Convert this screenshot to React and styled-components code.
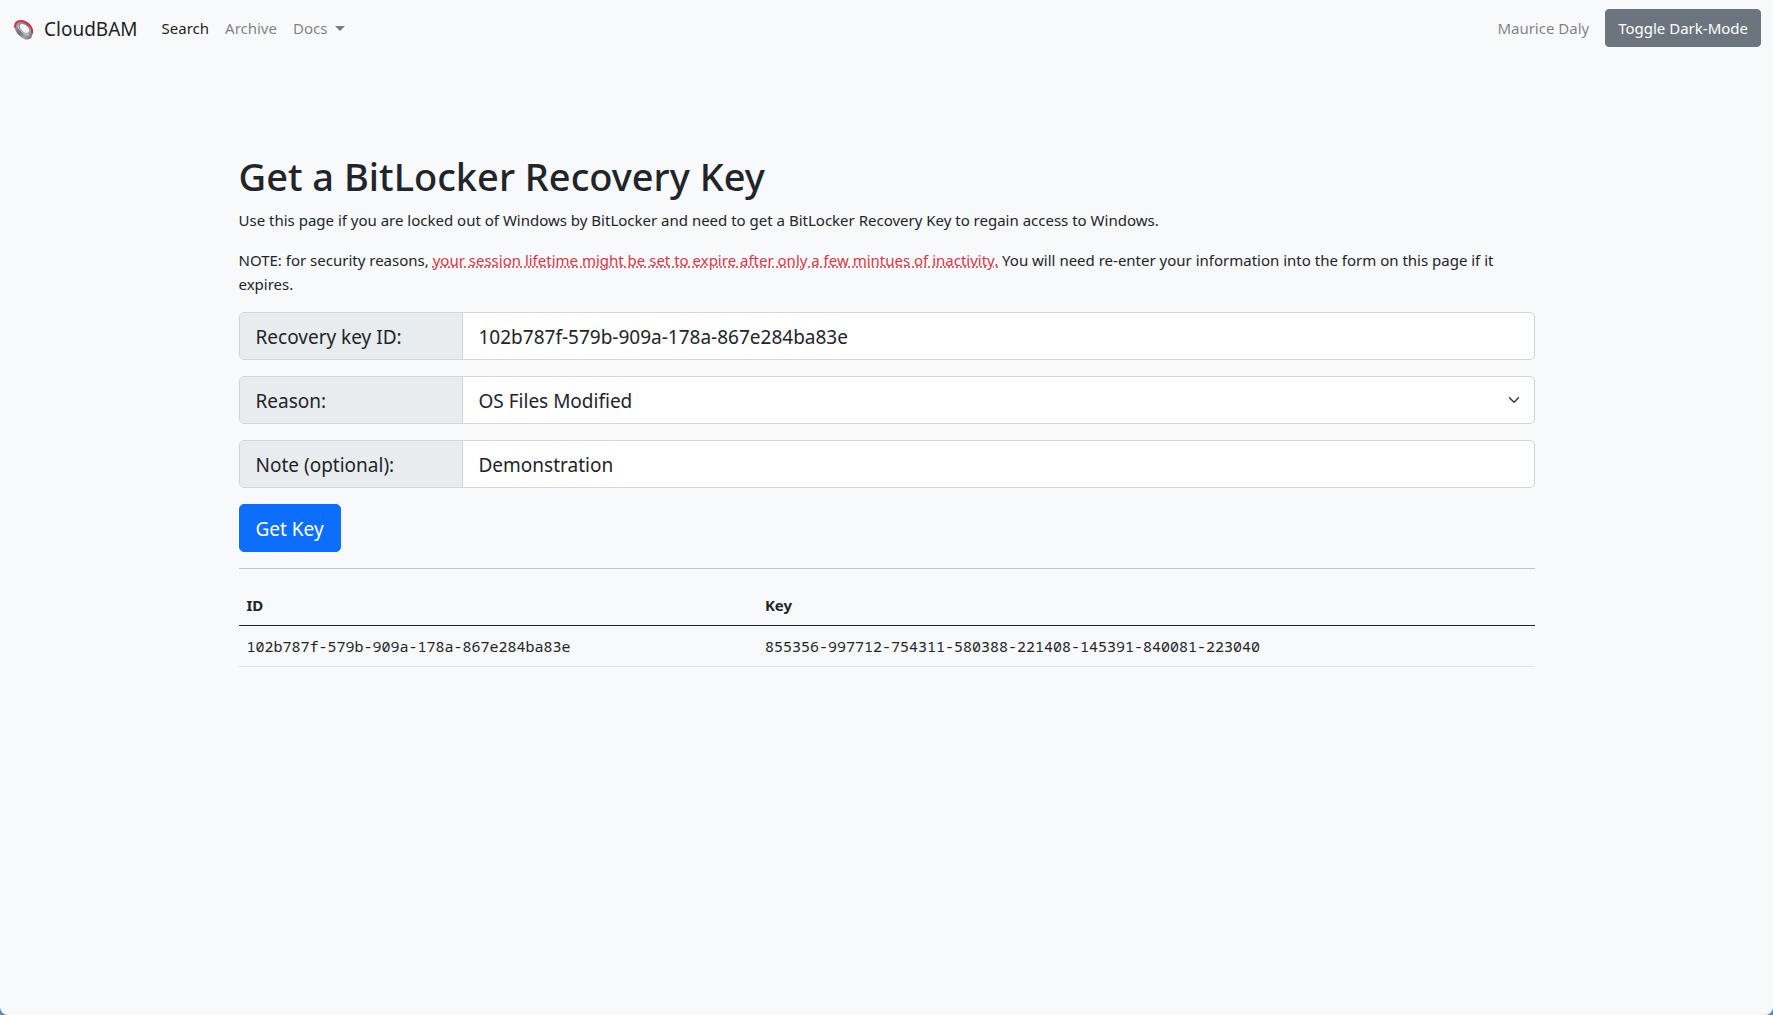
import React, { useState } from "react";
import styled, { createGlobalStyle } from "styled-components";

const GlobalStyle = createGlobalStyle`
  *, *::before, *::after { box-sizing: border-box; }
  html { background: #3f93d8; }
  body {
    margin: 0;
    color: #212529;
    font-family: "Segoe UI", "Noto Sans", "Open Sans", sans-serif;
    font-size: 15px;
    line-height: 24px;
  }
`;

const Page = styled.div`
  min-height: 100vh;
  background: #f8f9fb;
  border-radius: 0 0 8px 8px;
`;

const Navbar = styled.nav`
  display: flex;
  align-items: center;
  justify-content: space-between;
  min-height: 56px;
  padding: 8px 12px;
`;

const NavGroup = styled.div`
  display: flex;
  align-items: center;
`;

const Brand = styled.a`
  display: flex;
  align-items: center;
  gap: 8px;
  margin-right: 16px;
  padding-top: 2px;
  color: rgba(0, 0, 0, 0.9);
  font-size: 19px;
  line-height: 30px;
  text-decoration: none;
`;

const NavLink = styled.a`
  display: flex;
  align-items: center;
  padding: 8px;
  color: ${(p) => (p.$active ? "rgba(0, 0, 0, 0.9)" : "rgba(0, 0, 0, 0.5)")};
  text-decoration: none;
`;

const Caret = styled.span`
  margin-left: 8px;
  border-top: 5px solid currentColor;
  border-right: 5px solid transparent;
  border-left: 5px solid transparent;
`;

const Button = styled.button`
  padding: ${(p) => (p.$large ? "9px 16px 7px" : "6px 12px")};
  border: 1px solid ${(p) => (p.$primary ? "#0d6efd" : "#6c757d")};
  border-radius: ${(p) => (p.$large ? "5px" : "4px")};
  background: ${(p) => (p.$primary ? "#0d6efd" : "#6c757d")};
  color: #fff;
  font-family: inherit;
  font-size: ${(p) => (p.$large ? "19px" : "15px")};
  line-height: ${(p) => (p.$large ? "30px" : "24px")};
  cursor: pointer;
`;

const UserLink = styled(NavLink)`
  margin-right: 8px;
`;

const Main = styled.main`
  max-width: 1320px;
  margin: 0 auto;
  padding: 96px 12px 48px;
`;

const Title = styled.h1`
  margin: 0 0 8px;
  font-size: 38px;
  font-weight: 500;
  line-height: 48px;
`;

const Text = styled.p`
  margin: 0 0 16px;
`;

const Warning = styled.span`
  color: #dc3545;
  text-decoration: underline dotted;
`;

const Form = styled.form`
  display: flex;
  flex-direction: column;
  align-items: stretch;
  gap: 16px;
`;

const Field = styled.div`
  display: flex;
  height: 48px;
  border: 1px solid #ced4da;
  border-radius: 5px;
  background: #fff;
  overflow: hidden;
  font-size: 19px;
  line-height: 30px;
`;

const Label = styled.label`
  flex: 0 0 223px;
  padding: 9px 16px 7px;
  border-right: 1px solid #ced4da;
  background: #e9ecef;
`;

const Input = styled.input`
  flex: 1;
  min-width: 0;
  padding: 9px 16px 7px;
  border: 0;
  outline: 0;
  background: transparent;
  color: inherit;
  font: inherit;
`;

const SelectWrap = styled.div`
  display: grid;
  flex: 1;
  align-items: center;

  > * { grid-area: 1 / 1; }
  > svg { justify-self: end; margin-right: 12px; pointer-events: none; }
`;

const Select = styled.select`
  width: 100%;
  height: 46px;
  padding: 9px 48px 7px 16px;
  border: 0;
  outline: 0;
  appearance: none;
  background: transparent;
  color: inherit;
  font: inherit;
`;

const Actions = styled.div`
  display: flex;
`;

const Divider = styled.hr`
  height: 1px;
  margin: 16px 0;
  border: 0;
  background: #c2c4c7;
`;

const Table = styled.table`
  width: 100%;
  border-collapse: collapse;
  table-layout: fixed;
`;

const HeadCell = styled.th`
  width: ${(p) => p.$width};
  padding: 8px;
  border-bottom: 1px solid #212529;
  font-weight: 700;
  text-align: left;
`;

const Cell = styled.td`
  padding: 8px;
  border-bottom: 1px solid #dee2e6;
`;

const Code = styled.code`
  font-family: Consolas, "Noto Sans Mono", "DejaVu Sans Mono", monospace;
  font-size: 15px;
`;

function Logo() {
  return (
    <svg width="24" height="24" viewBox="0 0 24 24" aria-hidden="true">
      <defs>
        <linearGradient id="steel" x1="0" y1="0" x2="1" y2="1">
          <stop offset="0" stopColor="#b9bbc2" />
          <stop offset="0.45" stopColor="#6e717b" />
          <stop offset="0.7" stopColor="#a4a6ae" />
          <stop offset="1" stopColor="#5b5d66" />
        </linearGradient>
      </defs>
      <path
        fillRule="evenodd"
        fill="url(#steel)"
        d="M3 8C4 3 10 2 15 5C20 8 22 14 20 19C19 23 14 24 9 20C5 17 2 13 3 8ZM8 8C7 11 10 15 14 16C18 16 18 12 15 9C13 7 9 6 8 8Z"
      />
      <path d="M3 10C3 4 8 3 13 5C18 7 21 12 20 16" fill="none" stroke="#cf3a42" strokeWidth="2" strokeLinecap="round" />
      <path d="M6 8C6 12 10 17 17 18" fill="none" stroke="#d5d6db" strokeWidth="1" />
    </svg>
  );
}

function Chevron() {
  return (
    <svg width="16" height="12" viewBox="0 0 16 16" aria-hidden="true">
      <path d="M2 5l6 6 6-6" fill="none" stroke="#343a40" strokeWidth="2" strokeLinecap="round" strokeLinejoin="round" />
    </svg>
  );
}

export default function App() {
  const [keyId, setKeyId] = useState("102b787f-579b-909a-178a-867e284ba83e");
  const [note, setNote] = useState("Demonstration");

  return (
    <>
      <GlobalStyle />
      <Page>
        <Navbar>
          <NavGroup>
            <Brand href="#"><Logo />CloudBAM</Brand>
            <NavLink href="#" $active>Search</NavLink>
            <NavLink href="#">Archive</NavLink>
            <NavLink href="#">Docs<Caret /></NavLink>
          </NavGroup>
          <NavGroup>
            <UserLink href="#">Maurice Daly</UserLink>
            <Button type="button">Toggle Dark-Mode</Button>
          </NavGroup>
        </Navbar>
        <Main>
          <Title>Get a BitLocker Recovery Key</Title>
          <Text>
            Use this page if you are locked out of Windows by BitLocker and need to get a BitLocker Recovery Key to
            regain access to Windows.
          </Text>
          <Text>
            NOTE: for security reasons,{" "}
            <Warning>your session lifetime might be set to expire after only a few mintues of inactivity.</Warning>{" "}
            You will need re-enter your information into the form on this page if it expires.
          </Text>
          <Form onSubmit={(e) => e.preventDefault()}>
            <Field>
              <Label htmlFor="key-id">Recovery key ID:</Label>
              <Input id="key-id" value={keyId} onChange={(e) => setKeyId(e.target.value)} />
            </Field>
            <Field>
              <Label htmlFor="reason">Reason:</Label>
              <SelectWrap>
                <Select id="reason" defaultValue="os">
                  <option value="os">OS Files Modified</option>
                </Select>
                <Chevron />
              </SelectWrap>
            </Field>
            <Field>
              <Label htmlFor="note">Note (optional):</Label>
              <Input id="note" value={note} onChange={(e) => setNote(e.target.value)} />
            </Field>
            <Actions>
              <Button type="submit" $primary $large>Get Key</Button>
            </Actions>
          </Form>
          <Divider />
          <Table>
            <thead>
              <tr>
                <HeadCell $width="40%">ID</HeadCell>
                <HeadCell $width="60%">Key</HeadCell>
              </tr>
            </thead>
            <tbody>
              <tr>
                <Cell><Code>102b787f-579b-909a-178a-867e284ba83e</Code></Cell>
                <Cell><Code>855356-997712-754311-580388-221408-145391-840081-223040</Code></Cell>
              </tr>
            </tbody>
          </Table>
        </Main>
      </Page>
    </>
  );
}
